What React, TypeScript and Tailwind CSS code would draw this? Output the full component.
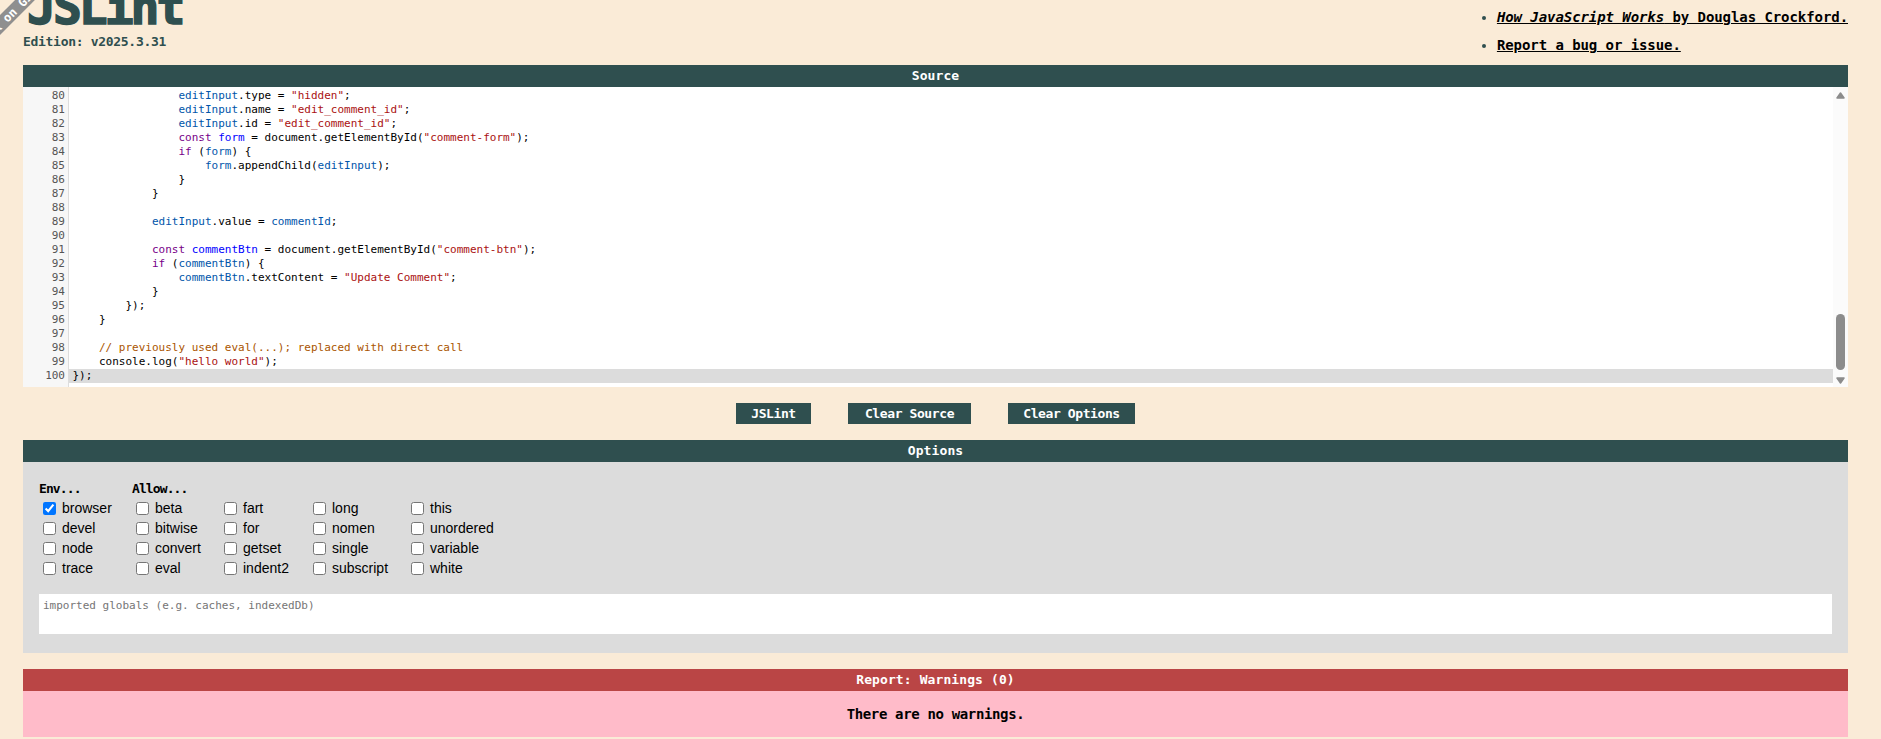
import React from "react";

const display = "font-['DejaVu_Sans_Mono',monospace] font-bold";

const kw = "text-[#770088]";
const def = "text-[#0000ff]";
const vr = "text-[#0055aa]";
const str = "text-[#aa1111]";
const com = "text-[#aa5500]";

type Token = [string, string?];

const line = (indent: number, ...tokens: Token[]): Token[] => [[" ".repeat(indent)], ...tokens];

const sourceLines: Token[][] = [
  line(16, ["editInput", vr], [" = document.createElement("], ['"input"', str], [");"]),
  line(16, ["editInput", vr], [".type = "], ['"hidden"', str], [";"]),
  line(16, ["editInput", vr], [".name = "], ['"edit_comment_id"', str], [";"]),
  line(16, ["editInput", vr], [".id = "], ['"edit_comment_id"', str], [";"]),
  line(16, ["const", kw], [" "], ["form", def], [" = document.getElementById("], ['"comment-form"', str], [");"]),
  line(16, ["if", kw], [" ("], ["form", vr], [") {"]),
  line(20, ["form", vr], [".appendChild("], ["editInput", vr], [");"]),
  line(16, ["}"]),
  line(12, ["}"]),
  line(0),
  line(12, ["editInput", vr], [".value = "], ["commentId", vr], [";"]),
  line(0),
  line(12, ["const", kw], [" "], ["commentBtn", def], [" = document.getElementById("], ['"comment-btn"', str], [");"]),
  line(12, ["if", kw], [" ("], ["commentBtn", vr], [") {"]),
  line(16, ["commentBtn", vr], [".textContent = "], ['"Update Comment"', str], [";"]),
  line(12, ["}"]),
  line(8, ["});"]),
  line(4, ["}"]),
  line(0),
  line(4, ["// previously used eval(...); replaced with direct call", com]),
  line(4, ["console.log("], ['"hello world"', str], [");"]),
  line(0, ["});"]),
];

const optionColumns = [
  { width: "w-[93px]", title: "Env...", items: ["browser", "devel", "node", "trace"] },
  { width: "w-[88px]", title: "Allow...", items: ["beta", "bitwise", "convert", "eval"] },
  { width: "w-[89px]", title: "", items: ["fart", "for", "getset", "indent2"] },
  { width: "w-[98px]", title: "", items: ["long", "nomen", "single", "subscript"] },
  { width: "w-[98px]", title: "", items: ["this", "unordered", "variable", "white"] },
];

function Bar({ children, bg = "bg-[#2f4f4f]" }: { children: React.ReactNode; bg?: string }) {
  return (
    <div className={`${bg} ${display} h-[22px] flex items-center justify-center text-[13px] tracking-[0.1px] text-white`}>
      {children}
    </div>
  );
}

function ActionButton({ label, width }: { label: string; width: string }) {
  return (
    <button className={`${width} ${display} h-[21px] bg-[#2f4f4f] text-[13px] tracking-[-0.4px] text-white`}>
      {label}
    </button>
  );
}

function Scrollbar() {
  return (
    <div className="w-[15px] shrink-0 bg-[#fbfbfb] flex flex-col items-center pt-[5px] pb-[3px]">
      <svg width="9" height="7" viewBox="0 0 9 7" className="shrink-0">
        <path d="M4.5 1 L8 6 H1 Z" fill="#8c8c8c" stroke="#8c8c8c" strokeWidth="1.5" strokeLinejoin="round" />
      </svg>
      <div className="mt-auto w-[9px] h-[56px] rounded-[5px] bg-[#8c8c8c]" />
      <svg width="9" height="7" viewBox="0 0 9 7" className="mt-[7px] shrink-0">
        <path d="M1 1 H8 L4.5 6 Z" fill="#8c8c8c" stroke="#8c8c8c" strokeWidth="1.5" strokeLinejoin="round" />
      </svg>
    </div>
  );
}

function Editor() {
  return (
    <div className="h-[300px] bg-white flex overflow-hidden">
      <div className="flex-1 min-w-0 overflow-hidden font-['DejaVu_Sans_Mono',monospace] text-[11px] leading-[14px] text-black">
        <div className="-mt-[12px] flex">
          <div className="w-[46px] shrink-0 bg-[#f7f7f7] border-r border-[#dddddd] text-right pr-[3px] text-[#555555] h-[320px]">
            {sourceLines.map((_, i) => (
              <div key={i} className="h-[14px]">{79 + i}</div>
            ))}
          </div>
          <div className="flex-1 min-w-0">
            {sourceLines.map((tokens, i) => (
              <div key={i} className={`h-[14px] pl-[3.5px] whitespace-pre ${i === sourceLines.length - 1 ? "bg-[#dcdcdc]" : ""}`}>
                {tokens.map(([text, color], j) => (
                  <span key={j} className={color}>{text}</span>
                ))}
              </div>
            ))}
          </div>
        </div>
      </div>
      <Scrollbar />
    </div>
  );
}

function Options() {
  return (
    <div className="bg-[#dcdcdc] h-[191px] pt-[18px] pl-[16px] pr-[16px]">
      <div className="flex">
        {optionColumns.map((col, i) => (
          <div key={i} className={col.width}>
            <div className={`${display} h-[17px] text-[13px] leading-[17px] tracking-[-0.9px] text-black`}>{col.title || "\u00a0"}</div>
            <div className="pl-[4px] pt-[1px]">
              {col.items.map((item) => (
                <label key={item} className="flex items-center h-[20px] text-[14px] font-['Liberation_Sans',Arial,sans-serif] text-black">
                  <input type="checkbox" defaultChecked={item === "browser"} className="w-[13px] h-[13px] mr-[6px]" />
                  {item}
                </label>
              ))}
            </div>
          </div>
        ))}
      </div>
      <textarea
        placeholder="imported globals (e.g. caches, indexedDb)"
        className="block mt-[16px] w-full h-[40px] bg-white px-[4px] pt-[5px] resize-none outline-none font-['DejaVu_Sans_Mono',monospace] text-[11px] leading-[14px] placeholder:text-[#757575]"
      />
    </div>
  );
}

export default function App() {
  return (
    <div className="min-h-[739px] bg-[#faebd7] px-[23px] pr-[33px] overflow-hidden relative">
      {/* corner ribbon */}
      <div className={`${display} absolute -left-[45px] top-[3px] w-[120px] h-[14px] -rotate-45 bg-[#8f8f8f] flex items-center justify-center text-[12px] text-white whitespace-nowrap overflow-hidden`}>
        Fork on GitHub
      </div>

      <header className="h-[65px] flex justify-between overflow-hidden">
        <div>
          <div className={`${display} -mt-[15px] ml-[4px] h-[44px] text-[48px] leading-[44px] tracking-[-3px] [-webkit-text-stroke:1.5px_#2f4f4f] text-[#2f4f4f]`}>JSLint</div>
          <div className={`${display} mt-[3px] text-[13px] leading-[20px] tracking-[-0.3px] text-[#2f4f4f]`}>Edition: v2025.3.31</div>
        </div>
        <ul className={`${display} text-[14px] leading-[28px] tracking-[-0.07px] text-black list-disc marker:text-[#2f4f4f] pl-[14px]`}>
          <li className="mt-[3px]">
            <a className="underline"><em>How JavaScript Works</em> by Douglas Crockford.</a>
          </li>
          <li>
            <a className="underline">Report a bug or issue.</a>
          </li>
        </ul>
      </header>

      <Bar>Source</Bar>
      <Editor />

      <div className="flex justify-center gap-[37px] pt-[16px] pb-[16px]">
        <ActionButton label="JSLint" width="w-[75px]" />
        <ActionButton label="Clear Source" width="w-[123px]" />
        <ActionButton label="Clear Options" width="w-[127px]" />
      </div>

      <Bar>Options</Bar>
      <Options />

      <div className="mt-[16px]">
        <Bar bg="bg-[#ba4545]">Report: Warnings (0)</Bar>
        <div className={`${display} h-[46px] bg-[#ffbbc9] flex items-center justify-center text-[14px] tracking-[-0.35px] text-black`}>
          There are no warnings.
        </div>
      </div>
    </div>
  );
}
